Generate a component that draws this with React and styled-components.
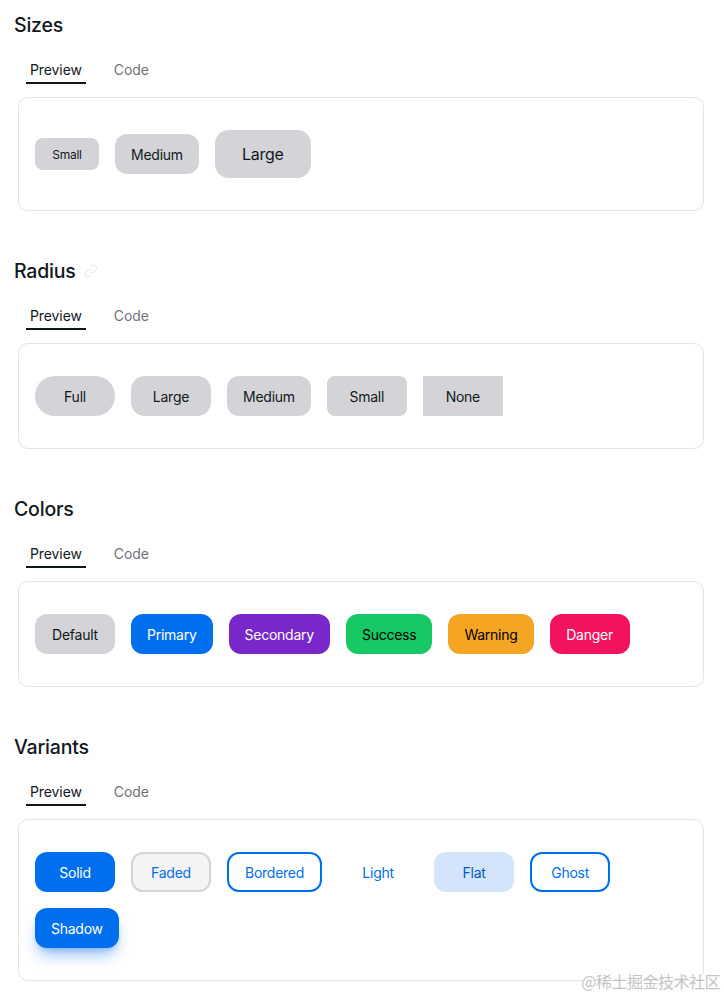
import React from 'react';
import styled, { createGlobalStyle, css } from 'styled-components';
import { Link } from 'lucide-react';

const GlobalStyle = createGlobalStyle`
  body {
    margin: 0;
    background: #ffffff;
    font-family: Inter, "Noto Sans", sans-serif;
    color: #11181c;
  }
`;

const Page = styled.div`
  position: relative;
  padding: 11px 20px 15px 14px;
  min-height: 995px;
  box-sizing: border-box;
`;

const Section = styled.section`
  margin-bottom: ${(p) => (p.$last ? '0' : '46px')};
`;

const Heading = styled.h2`
  display: flex;
  align-items: center;
  gap: 8px;
  margin: 0;
  height: 28px;
  font-size: 19.5px;
  font-weight: 500;
  line-height: 28px;
  letter-spacing: -0.2px;
  color: #11181c;
`;

const Anchor = styled.span`
  display: inline-flex;
  color: #ececec;
`;

const TabList = styled.div`
  display: flex;
  gap: 8px;
  padding: 4px;
  margin-top: 10px;
`;

const Tab = styled.div`
  position: relative;
  height: 32px;
  padding: 0 12px;
  display: flex;
  align-items: center;
  font-size: 14px;
  letter-spacing: -0.1px;
  color: ${(p) => (p.$active ? '#11181c' : '#71717a')};

  ${(p) =>
    p.$active &&
    css`
      &::after {
        content: '';
        position: absolute;
        left: 10%;
        bottom: 1px;
        width: 80%;
        height: 2px;
        background: #11181c;
      }
    `}
`;

const Card = styled.div`
  margin: 8px 0 0 4px;
  border: 1px solid #e4e4e7;
  border-radius: 10px;
  padding: 32px 16px;
  display: flex;
  flex-wrap: wrap;
  align-items: center;
  gap: 16px;
`;

const sizes = {
  sm: css`
    height: 32px;
    min-width: 64px;
    padding: 0 12px;
    font-size: 12px;
    border-radius: 8px;
  `,
  md: css`
    height: 40px;
    min-width: 80px;
    padding: 0 16px;
    font-size: 14px;
    border-radius: 12px;
  `,
  lg: css`
    height: 48px;
    min-width: 96px;
    padding: 0 24px;
    font-size: 16px;
    border-radius: 14px;
  `,
};

const radii = {
  full: '9999px',
  lg: '14px',
  md: '12px',
  sm: '8px',
  none: '0',
};

const palette = {
  default: { bg: '#d4d4d8', fg: '#11181c' },
  primary: { bg: '#006fee', fg: '#ffffff' },
  secondary: { bg: '#7828c8', fg: '#ffffff' },
  success: { bg: '#17c964', fg: '#000000' },
  warning: { bg: '#f5a524', fg: '#000000' },
  danger: { bg: '#f31260', fg: '#ffffff' },
};

const variants = {
  solid: (c) => css`
    background: ${c.bg};
    color: ${c.fg};
  `,
  faded: () => css`
    background: #f4f4f5;
    border: 2px solid #d4d4d8;
    color: #006fee;
  `,
  bordered: () => css`
    background: transparent;
    border: 2px solid #006fee;
    color: #006fee;
  `,
  light: () => css`
    background: transparent;
    color: #006fee;
  `,
  flat: () => css`
    background: #d4e5fb;
    color: #005bc4;
  `,
  ghost: () => css`
    background: transparent;
    border: 2px solid #006fee;
    color: #006fee;
  `,
  shadow: (c) => css`
    background: ${c.bg};
    color: ${c.fg};
    box-shadow: 0 10px 15px -3px rgba(0, 111, 238, 0.4),
      0 4px 6px -4px rgba(0, 111, 238, 0.4);
  `,
};

const Button = styled.button`
  box-sizing: border-box;
  display: inline-flex;
  align-items: center;
  justify-content: center;
  border: none;
  font-family: Inter, "Noto Sans", sans-serif;
  font-weight: 400;
  letter-spacing: -0.25px;
  ${(p) => sizes[p.$size || 'md']}
  ${(p) => variants[p.$variant || 'solid'](palette[p.$color || 'default'])}
  ${(p) => p.$radius && `border-radius: ${radii[p.$radius]};`}
`;

const Watermark = styled.div`
  position: absolute;
  right: 4px;
  bottom: 3px;
  font-family: "Noto Sans CJK SC", sans-serif;
  font-size: 16px;
  color: #c4c4c4;
  text-shadow: 0 0 1px #fff, 0 0 2px #fff;
  letter-spacing: -0.5px;
`;

function Tabs() {
  return (
    <TabList>
      <Tab $active>Preview</Tab>
      <Tab>Code</Tab>
    </TabList>
  );
}

function Demo({ title, icon, children, last }) {
  return (
    <Section $last={last}>
      <Heading>
        {title}
        {icon && (
          <Anchor>
            <Link size={14} />
          </Anchor>
        )}
      </Heading>
      <Tabs />
      <Card>{children}</Card>
    </Section>
  );
}

export default function App() {
  return (
    <>
      <GlobalStyle />
      <Page>
        <Demo title='Sizes'>
          <Button $size='sm'>Small</Button>
          <Button $size='md'>Medium</Button>
          <Button $size='lg'>Large</Button>
        </Demo>
        <Demo title='Radius' icon>
          <Button $radius='full'>Full</Button>
          <Button $radius='lg'>Large</Button>
          <Button $radius='md'>Medium</Button>
          <Button $radius='sm'>Small</Button>
          <Button $radius='none'>None</Button>
        </Demo>
        <Demo title='Colors'>
          <Button $color='default'>Default</Button>
          <Button $color='primary'>Primary</Button>
          <Button $color='secondary'>Secondary</Button>
          <Button $color='success'>Success</Button>
          <Button $color='warning'>Warning</Button>
          <Button $color='danger'>Danger</Button>
        </Demo>
        <Demo title='Variants' last>
          <Button $color='primary' $variant='solid'>Solid</Button>
          <Button $color='primary' $variant='faded'>Faded</Button>
          <Button $color='primary' $variant='bordered'>Bordered</Button>
          <Button $color='primary' $variant='light'>Light</Button>
          <Button $color='primary' $variant='flat'>Flat</Button>
          <Button $color='primary' $variant='ghost'>Ghost</Button>
          <Button $color='primary' $variant='shadow'>Shadow</Button>
        </Demo>
        <Watermark>@稀土掘金技术社区</Watermark>
      </Page>
    </>
  );
}
